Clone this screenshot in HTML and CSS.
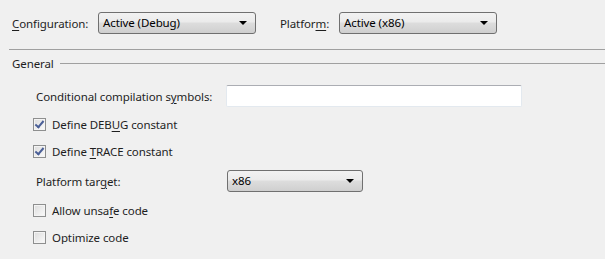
FILE: index.html
```html
<!DOCTYPE html>
<html lang="en">
<head>
    <meta charset="UTF-8">
    <title>Build</title>
    <link rel="stylesheet" href="styles.css">
</head>
<body>
    <!-- Configuration / Platform bar -->
    <div class="toolbar">
        <span class="bar-label config-label"><u>C</u>onfiguration:</span>
        <div class="combo wide">Active (Debug)<span class="arrow"></span></div>
        <span class="bar-label platform-label">Platfor<u>m</u>:</span>
        <div class="combo wide">Active (x86)<span class="arrow"></span></div>
    </div>
    <div class="separator"></div>

    <!-- General group -->
    <div class="group-title">
        <span>General</span>
        <div class="group-line"></div>
    </div>

    <div class="row row-symbols">
        <span class="field-label">Conditional compilation s<u>y</u>mbols:</span>
        <div class="textbox"></div>
    </div>

    <div class="row check-row row-debug">
        <span class="checkbox checked"></span>
        <span>Define DEB<u>U</u>G constant</span>
    </div>

    <div class="row check-row row-trace">
        <span class="checkbox checked"></span>
        <span>Define <u>T</u>RACE constant</span>
    </div>

    <div class="row row-target">
        <span class="field-label">Platform tar<u>g</u>et:</span>
        <div class="combo narrow">x86<span class="arrow"></span></div>
    </div>

    <div class="row check-row row-unsafe">
        <span class="checkbox"></span>
        <span>Allow unsa<u>f</u>e code</span>
    </div>

    <div class="row check-row row-optimize">
        <span class="checkbox"></span>
        <span>Optimi<u>z</u>e code</span>
    </div>
</body>
</html>
```

FILE: styles.css
```css
/* Page */
body {
    margin: 0;
    background: #f0f0f0;
    font-family: "Noto Sans", "Open Sans", sans-serif;
    font-size: 11.5px;
    letter-spacing: -0.1px;
    color: #1e1e1e;
}

u {
    text-decoration-thickness: 1px;
    text-underline-offset: 2px;
}

/* Top bar */
.toolbar {
    display: flex;
    align-items: center;
    height: 22px;
    padding: 12px 0 0 12px;
}

.config-label {
    width: 86px;
}

.platform-label {
    width: 59px;
    margin-left: 24px;
}

.separator {
    margin: 15px 0 0 9px;
    border-top: 1px solid #a0a0a0;
}

/* Combo boxes */
.combo {
    position: relative;
    box-sizing: border-box;
    height: 22px;
    line-height: 19px;
    padding-left: 4px;
    border: 1px solid #707070;
    border-radius: 3px;
    background: linear-gradient(#f2f2f2 0%, #ebebeb 45%, #dddddd 50%, #cfcfcf 100%);
    color: #000;
}

.combo.wide {
    width: 158px;
}

.combo.narrow {
    width: 136px;
    margin-left: 1px;
}

.arrow {
    position: absolute;
    right: 8px;
    top: 8px;
    width: 0;
    height: 0;
    border-left: 4px solid transparent;
    border-right: 4px solid transparent;
    border-top: 4px solid #000;
}

/* Group header */
.group-title {
    display: flex;
    align-items: center;
    height: 14px;
    margin-top: 6px;
    padding-left: 12px;
}

.group-line {
    flex: 1;
    margin-left: 6px;
    border-top: 1px solid #a0a0a0;
}

/* Form rows */
.row {
    display: flex;
    align-items: center;
}

.field-label {
    width: 190px;
    padding-left: 36px;
}

.row-symbols {
    height: 22px;
    margin-top: 15px;
}

.textbox {
    box-sizing: border-box;
    width: 296px;
    height: 22px;
    background: #fff;
    border: 1px solid #e3e9ef;
    border-top-color: #abadb3;
    border-radius: 2px;
}

.check-row {
    height: 13px;
    padding-left: 33px;
}

.row-debug { margin-top: 11px; }
.row-trace { margin-top: 14px; }
.row-target { height: 22px; margin-top: 12px; }
.row-unsafe { margin-top: 12px; }
.row-optimize { margin-top: 14px; }

/* Checkboxes */
.checkbox {
    position: relative;
    box-sizing: border-box;
    width: 13px;
    height: 13px;
    margin-right: 6px;
    border: 1px solid #8e8f8f;
    background: linear-gradient(135deg, #dcdcdc, #fbfbfb);
    box-shadow: inset 0 0 0 1px #f4f4f4;
}

.checkbox.checked::after {
    content: "";
    position: absolute;
    left: 3px;
    top: 0px;
    width: 3px;
    height: 7px;
    border-right: 2px solid #4a5f97;
    border-bottom: 2px solid #4a5f97;
    transform: rotate(40deg);
}
```
